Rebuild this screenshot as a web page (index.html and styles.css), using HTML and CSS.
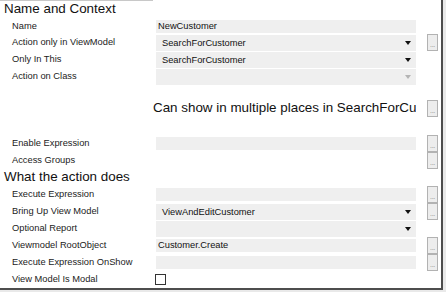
FILE: index.html
```html
<!DOCTYPE html>
<html>
<head>
<meta charset="utf-8">
<link rel="stylesheet" href="styles.css">
</head>
<body>
<div class="panel">
  <div class="topline"></div>
  <div class="title t1">Name and Context</div>
  <div class="row r-name"><span class="label">Name</span><div class="field text">NewCustomer</div></div>
  <div class="row r-dd"><span class="label">Action only in ViewModel</span><div class="field dd"><span>SearchForCustomer</span><i class="arrow"></i></div><button class="btn">...</button></div>
  <div class="row r-dd"><span class="label">Only In This</span><div class="field dd"><span>SearchForCustomer</span><i class="arrow"></i></div></div>
  <div class="row r-dd"><span class="label">Action on Class</span><div class="field dd"><span></span><i class="arrow off"></i></div></div>
  <div class="row r-big"><span class="label"></span><div class="bigtext">Can show in multiple places in SearchForCustomer</div><button class="btn">...</button></div>
  <div class="row r-tb"><span class="label">Enable Expression</span><div class="field text"></div><button class="btn">...</button></div>
  <div class="row r-tb"><span class="label">Access Groups</span><div class="nofield"></div><button class="btn">...</button></div>
  <div class="title t2">What the action does</div>
  <div class="row r-tb"><span class="label">Execute Expression</span><div class="field text"></div><button class="btn">...</button></div>
  <div class="row r-dd"><span class="label">Bring Up View Model</span><div class="field dd"><span>ViewAndEditCustomer</span><i class="arrow"></i></div><button class="btn">...</button></div>
  <div class="row r-dd"><span class="label">Optional Report</span><div class="field dd"><span></span><i class="arrow"></i></div></div>
  <div class="row r-tb"><span class="label">Viewmodel RootObject</span><div class="field text">Customer.Create</div><button class="btn">...</button></div>
  <div class="row r-tb"><span class="label">Execute Expression OnShow</span><div class="field text"></div><button class="btn">...</button></div>
  <div class="row r-cb"><span class="label">View Model Is Modal</span><div class="cbwrap"><span class="checkbox"></span></div></div>
</div>
</body>
</html>
```

FILE: styles.css
```css
html, body {
  margin: 0;
  padding: 0;
  background: #ffffff;
}
body {
  width: 446px;
  height: 292px;
  overflow: hidden;
  background: #e9e9e9;
  font-family: "Liberation Sans", Arial, sans-serif;
  color: #1e1e1e;
}
.panel {
  width: 441px;
  height: 288px;
  background: #ffffff;
  border-right: 2px solid #4d4d4d;
  border-bottom: 2px solid #4d4d4d;
  display: flex;
  flex-direction: column;
  overflow: hidden;
}
.topline {
  width: 153px;
  height: 1px;
  background: #c8c8c8;
  flex: none;
}
.title {
  font-size: 13.4px;
  line-height: 15px;
  padding-left: 4px;
  color: #111;
  flex: none;
}
.t1 { height: 17px; }
.t2 { height: 17px; }
.row {
  display: grid;
  grid-template-columns: 144px 260px 22px;
  padding-left: 12px;
  align-items: center;
  flex: none;
}
.label {
  font-size: 9.3px;
  line-height: 11px;
  color: #222;
  white-space: nowrap;
}
.field {
  background: #efefef;
  font-size: 9.3px;
  color: #111;
  box-sizing: border-box;
  white-space: nowrap;
  overflow: hidden;
}
.text {
  height: 13px;
  line-height: 13px;
  padding-left: 2px;
}
.dd {
  height: 16px;
  line-height: 16px;
  padding-left: 6px;
  display: flex;
  align-items: center;
  justify-content: space-between;
  padding-right: 5px;
}
.arrow {
  width: 0;
  height: 0;
  border-left: 3px solid transparent;
  border-right: 3px solid transparent;
  border-top: 4px solid #111;
}
.arrow.off { border-top-color: #b4b4b4; }
.r-name { height: 16px; }
.r-dd { height: 17px; }
.r-tb { height: 17px; }
.r-big {
  height: 20px;
  margin-top: 13px;
  margin-bottom: 17px;
}
.bigtext {
  font-size: 13.4px;
  line-height: 20px;
  white-space: nowrap;
  overflow: hidden;
  margin-left: -3px;
  color: #111;
}
.nofield { height: 12px; }
.btn {
  justify-self: end;
  width: 11px;
  height: 17px;
  padding: 5px 0 0 0;
  margin: 0;
  border: 1px solid #b2b2b2;
  background: #ededed;
  color: #8a8a8a;
  font-family: "Liberation Sans", Arial, sans-serif;
  font-size: 7px;
  line-height: 8px;
  letter-spacing: -0.3px;
  box-sizing: border-box;
  text-align: center;
  overflow: hidden;
}
.r-cb { height: 16px; }
.cbwrap { display: flex; }
.checkbox {
  width: 11px;
  height: 11px;
  box-sizing: border-box;
  border: 1px solid #333;
  background: #fff;
  margin-left: -1px;
}
```
